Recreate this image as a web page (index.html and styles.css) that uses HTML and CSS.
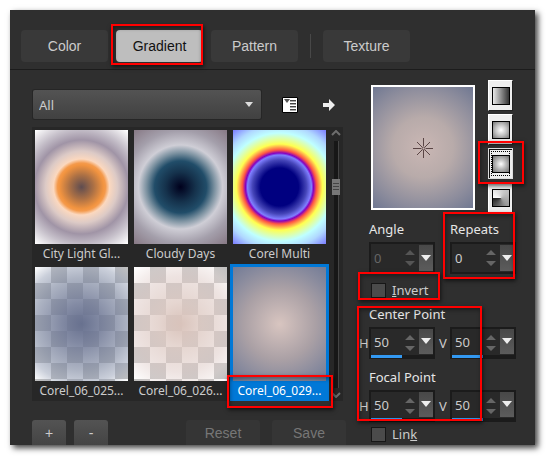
FILE: index.html
```html
<!DOCTYPE html>
<html lang="en">
  <head>
    <meta charset="UTF-8" />
    <meta name="viewport" content="width=device-width, initial-scale=1.0" />
    <title>Material Properties</title>
    <link rel="stylesheet" href="styles.css">
  </head>
  <body>
    <div class="dialog">
      <nav class="tabs">
        <button class="tab">Color</button>
        <div class="marked mark-tab"><button class="tab active">Gradient</button></div>
        <button class="tab">Pattern</button>
        <span class="divider"></span>
        <button class="tab">Texture</button>
      </nav>

      <div class="content">
        <section class="library">
          <div class="toolbar">
            <div class="category">
              <select aria-label="Category">
                <option>All</option>
              </select>
              <svg width="8" height="5" viewBox="0 0 8 5"><path d="M0 0h8L4 5z" fill="#ddd" /></svg>
            </div>
            <button class="icon-button" aria-label="Menu">
              <svg width="16" height="16" viewBox="0 0 16 16">
                <path d="M.5.5h15v15H.5z" fill="#fff" stroke="#000" />
                <path d="M2 2h6L5 6z" fill="#555" />
                <path d="M8 3.5h6M8 6.5h6M8 9.5h6M8 12.5h6" stroke="#444" />
                <path d="M8 4.5h6M8 7.5h6M8 10.5h6M8 13.5h6" stroke="#aaa" />
              </svg>
            </button>
            <button class="icon-button" aria-label="Export">
              <svg width="14" height="14" viewBox="0 0 14 14"><path d="M1 5h6V1l6 6-6 6V9H1z" fill="#eee" /></svg>
            </button>
          </div>

          <div class="list">
            <div class="swatches">
              <button class="swatch"><span class="thumb city"></span>City Light Gl...</button>
              <button class="swatch"><span class="thumb cloudy"></span>Cloudy Days</button>
              <button class="swatch"><span class="thumb multi"></span>Corel Multi</button>
              <button class="swatch"><span class="thumb c025"></span>Corel_06_025...</button>
              <button class="swatch"><span class="thumb c026"></span>Corel_06_026...</button>
              <button class="swatch selected"><span class="thumb c029"></span><span class="marked mark-name">Corel_06_029...</span></button>
            </div>
            <div class="scrollbar">
              <svg width="10" height="6" viewBox="0 0 10 6"><path d="M1 5l4-4 4 4" fill="none" stroke="#6d6d6d" stroke-width="2" /></svg>
              <div class="track"><div class="grip"></div></div>
              <svg width="10" height="6" viewBox="0 0 10 6"><path d="M1 1l4 4 4-4" fill="none" stroke="#6d6d6d" stroke-width="2" /></svg>
            </div>
          </div>

          <div class="actions">
            <button class="action small">+</button>
            <button class="action small">-</button>
            <button class="action" disabled>Reset</button>
            <button class="action" disabled>Save</button>
          </div>
        </section>

        <section class="settings">
          <div class="preview-row">
            <div class="preview">
              <svg width="20" height="20" viewBox="0 0 20 20">
                <path d="M10.5 0v8M10.5 12v8M0 10.5h8M13 10.5h7M4 4l5 5M12 12l5 5M17 4l-5 5M9 12l-5 5" stroke="#5a4545" />
                <circle cx="10.5" cy="10.5" r="1.5" fill="none" stroke="#5a4545" />
              </svg>
            </div>
            <div class="types">
              <button class="type" aria-label="Linear"><span class="style linear"></span></button>
              <button class="type" aria-label="Rectangular"><span class="style rectangular"></span></button>
              <div class="marked mark-type"><button class="type pressed" aria-label="Sunburst"><span class="style sunburst"></span></button></div>
              <button class="type" aria-label="Radial"><span class="style radial"></span></button>
            </div>
          </div>

          <div class="fields">
            <div class="field first">
              <label class="title" for="angle">Angle</label>
              <div class="spin disabled">
                <input id="angle" type="text" value="0" disabled />
                <svg width="10" height="16" viewBox="0 0 10 16"><path d="M0 5h10L5 0zM0 11h10l-5 5z" fill="#555" /></svg>
                <button aria-label="Angle slider"><svg width="10" height="6" viewBox="0 0 10 6"><path d="M0 0h10L5 6z" fill="#eee" /></svg></button>
              </div>
            </div>
            <div class="field second marked mark-repeats">
              <label class="title" for="repeats">Repeats</label>
              <div class="spin">
                <input id="repeats" type="text" value="0" />
                <svg width="10" height="16" viewBox="0 0 10 16"><path d="M0 5h10L5 0zM0 11h10l-5 5z" fill="#666" /></svg>
                <button aria-label="Repeats slider"><svg width="10" height="6" viewBox="0 0 10 6"><path d="M0 0h10L5 6z" fill="#eee" /></svg></button>
              </div>
            </div>
          </div>

          <div class="check marked mark-invert">
            <input id="invert" type="checkbox" />
            <label for="invert"><u>I</u>nvert</label>
          </div>

          <div class="points marked mark-points">
            <div class="title">Center Point</div>
            <div class="fields">
              <label for="center-h">H</label>
              <div class="spin level">
                <input id="center-h" type="text" value="50" />
                <svg width="10" height="16" viewBox="0 0 10 16"><path d="M0 5h10L5 0zM0 11h10l-5 5z" fill="#666" /></svg>
                <button aria-label="Center H slider"><svg width="10" height="6" viewBox="0 0 10 6"><path d="M0 0h10L5 6z" fill="#eee" /></svg></button>
              </div>
              <label class="vertical" for="center-v">V</label>
              <div class="spin level">
                <input id="center-v" type="text" value="50" />
                <svg width="10" height="16" viewBox="0 0 10 16"><path d="M0 5h10L5 0zM0 11h10l-5 5z" fill="#666" /></svg>
                <button aria-label="Center V slider"><svg width="10" height="6" viewBox="0 0 10 6"><path d="M0 0h10L5 6z" fill="#eee" /></svg></button>
              </div>
            </div>
            <div class="title focal">Focal Point</div>
            <div class="fields">
              <label for="focal-h">H</label>
              <div class="spin level">
                <input id="focal-h" type="text" value="50" />
                <svg width="10" height="16" viewBox="0 0 10 16"><path d="M0 5h10L5 0zM0 11h10l-5 5z" fill="#666" /></svg>
                <button aria-label="Focal H slider"><svg width="10" height="6" viewBox="0 0 10 6"><path d="M0 0h10L5 6z" fill="#eee" /></svg></button>
              </div>
              <label class="vertical" for="focal-v">V</label>
              <div class="spin level">
                <input id="focal-v" type="text" value="50" />
                <svg width="10" height="16" viewBox="0 0 10 16"><path d="M0 5h10L5 0zM0 11h10l-5 5z" fill="#666" /></svg>
                <button aria-label="Focal V slider"><svg width="10" height="6" viewBox="0 0 10 6"><path d="M0 0h10L5 6z" fill="#eee" /></svg></button>
              </div>
            </div>
          </div>

          <div class="check link">
            <input id="link" type="checkbox" />
            <label for="link">Lin<u>k</u></label>
          </div>
        </section>
      </div>
    </div>
  </body>
</html>
```
FILE: styles.css
```css
* {
  margin: 0;
  padding: 0;
  box-sizing: border-box;
}

body {
  padding: 10px 11px 11px 10px;
  background-color: #fff;
  font-family: "Noto Sans", "Open Sans", sans-serif;
  font-size: 13px;
  line-height: 20px;
  color: #ccc;
}

button,
input,
select {
  font: inherit;
  color: inherit;
  border: none;
  background: none;
}

svg {
  display: block;
}

.dialog {
  background-color: #2f2f2f;
  box-shadow: 3px 3px 6px rgba(0, 0, 0, 0.75);
}

.tabs {
  display: flex;
  gap: 8px;
  padding: 20px 11px 7px;
  border-bottom: 1px solid #1c1c1c;
}

.tab {
  width: 87px;
  height: 32px;
  border-radius: 4px;
  background-color: #393939;
  font-family: "Liberation Sans", Arial, sans-serif;
  font-size: 14px;
}

.tab.active {
  display: block;
  background-color: #bebebe;
  color: #111;
}

.divider {
  width: 1px;
  height: 24px;
  margin: 4px 4px 0;
  background-color: #484848;
}

/* red callout frames */
.marked {
  position: relative;
}

.marked::after {
  content: "";
  position: absolute;
  z-index: 1;
  border: 2px solid #f00;
  box-shadow: 1px 2px 4px rgba(0, 0, 0, 0.6), inset 1px 2px 4px rgba(0, 0, 0, 0.4);
  pointer-events: none;
}

.mark-tab::after {
  inset: -6px 0 -3px -5px;
}

.mark-name::after {
  inset: -6px -4px -7px -3px;
}

.mark-type::after {
  inset: -7px -11px -5px -10px;
}

.mark-repeats::after {
  inset: -7px 1px -5px -7px;
}

.mark-invert::after {
  inset: -8px 76px 0 -1px;
}

.mark-points::after {
  inset: 2px 34px 1px -2px;
}

.content {
  display: flex;
  gap: 13px;
  padding: 0 19px 0 22px;
}

.library {
  flex: 1;
  padding-top: 20px;
}

.toolbar {
  display: flex;
  align-items: center;
  height: 29px;
  padding-left: 1px;
}

.category {
  position: relative;
  width: 228px;
  margin-right: 21px;
}

.category select {
  appearance: none;
  width: 100%;
  height: 29px;
  padding: 0 6px;
  border-radius: 2px;
  background: linear-gradient(#535353, #414141);
  box-shadow: 0 0 0 1px #262626;
}

.category svg {
  position: absolute;
  right: 8px;
  top: 12px;
  pointer-events: none;
}

.icon-button + .icon-button {
  margin-left: 24px;
}

.list {
  display: flex;
  margin-top: 8px;
  margin-right: 3px;
  background-color: #272727;
}

.swatches {
  flex: 1;
  display: grid;
  grid-template-columns: repeat(3, 1fr);
}

.swatch {
  padding: 3px 0 0;
  font-size: 12px;
  line-height: 20px;
  text-align: center;
}

.swatch.selected {
  background-color: #0078d7;
  color: #fff;
}

.selected .marked {
  display: block;
}

.thumb {
  display: block;
  height: 114px;
  margin: 0 3px;
}

.city {
  background: radial-gradient(circle, #5e4c50 0, #ab7045 12px, #f29440 22px, #f49a4c 24px, #fbd8bf 28px, #dccac6 36px, #a094a6 47px, #c6c0ca 58px, #fff 73px);
}

.cloudy {
  background: radial-gradient(circle, #00001c 0, #15324c 15px, #214d69 26px, #7b91a0 34px, #cfced6 42px, #a49fab 56px, #887a86 73px);
}

.multi {
  background: radial-gradient(circle, #000080 19px, #4545b8 27px, #7f7fff 32px, #8500c0 34px, #ff5545 37px, #ffff50 43px, #bfffff 54px, #b0d8ff 62px, #7878ff 74px);
}

.c025 {
  background:
    radial-gradient(circle, #68718f 0, rgba(112, 121, 150, 0.87) 20px, rgba(128, 138, 162, 0.65) 46px, rgba(150, 160, 182, 0.5) 60px, transparent 73px),
    repeating-conic-gradient(#c0c0c0 0 25%, #fff 0 50%) 0 0 / 32px 32px;
}

.c026 {
  background:
    radial-gradient(circle, #d9c3bb 0, rgba(222, 202, 195, 0.78) 22px, rgba(223, 204, 200, 0.55) 48px, rgba(230, 215, 212, 0.4) 60px, transparent 73px),
    repeating-conic-gradient(#c0c0c0 0 25%, #fff 0 50%) 0 0 / 32px 32px;
}

.c029 {
  background: radial-gradient(circle, #d8c5c0 0, #aaa0a5 36px, #888a9d 58px, #727b96 74px);
}

.scrollbar {
  display: flex;
  flex-direction: column;
  align-items: center;
  width: 14px;
  padding: 3px 0;
}

.track {
  flex: 1;
  width: 5px;
  margin: 5px 0 4px;
  padding-top: 38px;
  border-right: 1px solid #444;
  background-color: #171717;
}

.grip {
  width: 8px;
  height: 16px;
  margin-left: -2px;
  border: solid #777;
  border-width: 4px 1px 3px;
  background: repeating-linear-gradient(#444 0 1px, #777 1px 3px);
}

.actions {
  display: flex;
  gap: 8px;
  margin-top: 19px;
}

.action {
  width: 74px;
  height: 25px;
  margin-left: 4px;
  border-radius: 3px 3px 0 0;
  background-color: #353535;
  font-family: "Liberation Sans", Arial, sans-serif;
  font-size: 14px;
}

.action.small {
  width: 34px;
  margin-left: 0;
  background: linear-gradient(#535353, #444);
}

.action.small + .action:disabled {
  margin-left: auto;
}

.action:disabled {
  color: #777;
}

.settings {
  width: 157px;
  padding-top: 10px;
}

.preview-row {
  display: flex;
  gap: 13px;
  padding-left: 12px;
}

.preview {
  display: flex;
  justify-content: center;
  align-items: center;
  width: 104px;
  height: 125px;
  margin-top: 5px;
  border: 2px solid #fff;
  background: radial-gradient(circle, #cab7b4 0, #b8abaa 30px, #8c8c9c 60px, #707892 78px);
}

.types {
  display: grid;
  gap: 3px;
}

.type {
  display: flex;
  justify-content: center;
  align-items: center;
  width: 25px;
  height: 31px;
  border: 1px solid #fff;
  border-right-color: #222;
  border-bottom-color: #222;
  background-color: #eee;
}

.type.pressed {
  border: 1px solid #ddd;
  box-shadow: inset 1px 1px #111;
  outline: 1px dotted #000;
  outline-offset: -4px;
}

.style {
  width: 18px;
  height: 18px;
  border: 1px solid #000;
}

.linear {
  background: linear-gradient(90deg, #e8e8e8, #333);
}

.rectangular {
  background: radial-gradient(#fff, rgba(140, 140, 140, 0.4) 45%, #777);
}

.sunburst {
  background: radial-gradient(circle, #fff, #bbb 5px, #666 12px);
}

.radial {
  background: conic-gradient(from 270deg, #fff, #ccc 30%, #999 65%, #222);
}

.title {
  display: block;
  color: #e6e6e6;
}

.fields {
  display: flex;
}

.field .spin {
  margin-top: 3px;
}

.first {
  margin: 6px 15px 0 10px;
}

.second {
  margin-top: 6px;
}

.spin {
  display: flex;
  align-items: center;
  width: 66px;
  height: 32px;
  border: 2px solid #1b1b1b;
  background-color: #292929;
}

.spin.disabled input {
  color: #666;
}

.spin input {
  flex: 1;
  min-width: 0;
  height: 28px;
  padding-left: 3px;
}

.spin button {
  display: flex;
  justify-content: center;
  width: 14px;
  height: 26px;
  margin-left: 4px;
  padding-top: 10px;
  background: linear-gradient(#484848, #5c5c5c);
}

/* the strip under the number shows the value */
.spin.level {
  border-bottom-width: 1px;
  background: linear-gradient(90deg, #3399f2 50%, #1b1b1b 50%) bottom / 100% 3px no-repeat padding-box #292929;
}

.spin.level button {
  height: 25px;
  margin-bottom: 4px;
  padding-top: 9px;
}

.spin.level input {
  height: 25px;
  margin-bottom: 4px;
}

.spin.level > svg {
  margin-bottom: 2px;
}

.check {
  display: flex;
  align-items: center;
  gap: 6px;
  height: 20px;
  margin-top: 6px;
  padding-left: 12px;
}

.check input {
  appearance: none;
  width: 15px;
  height: 15px;
  border: 1px solid #171717;
  background-color: #4b4b4b;
}

.check.link {
  margin-top: 2px;
}

.points {
  margin-top: 4px;
}

.points .title {
  margin-left: 10px;
}

.points .focal {
  margin-top: 8px;
}

.points .fields {
  align-items: center;
  margin-top: 3px;
}

.points .fields label {
  width: 10px;
}

.points .fields .vertical {
  width: 15px;
  padding-left: 4px;
}
```
